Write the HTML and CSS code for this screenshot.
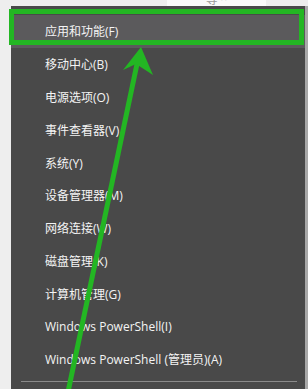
FILE: index.html
```html
<!DOCTYPE html>
<html lang="zh-CN">
<head>
<meta charset="utf-8">
<link rel="stylesheet" href="styles.css">
</head>
<body>
<div class="page">
  <div class="topstrip">
    <div class="topbox"><span class="toptext">等 ^</span></div>
  </div>
  <div class="row">
    <div class="menu">
      <div class="item active">应用和功能(F)</div>
      <div class="item">移动中心(B)</div>
      <div class="item">电源选项(O)</div>
      <div class="item">事件查看器(V)</div>
      <div class="item">系统(Y)</div>
      <div class="item">设备管理器(M)</div>
      <div class="item">网络连接(W)</div>
      <div class="item">磁盘管理(K)</div>
      <div class="item">计算机管理(G)</div>
      <div class="item">Windows PowerShell(I)</div>
      <div class="item">Windows PowerShell (管理员)(A)</div>
      <div class="sep"></div>
    </div>
    <div class="edge"></div>
  </div>
  <div class="greenbox"></div>
  <svg class="arrow" width="308" height="389" viewBox="0 0 308 389">
    <line x1="68" y1="392" x2="137" y2="64" stroke="#23b623" stroke-width="5"/>
    <polygon points="141,47 123,70 136,64 153,75" fill="#23b623"/>
  </svg>
</div>
</body>
</html>
```
FILE: styles.css
```css
html, body {
  margin: 0;
  padding: 0;
}
body {
  width: 308px;
  height: 389px;
  overflow: hidden;
  background: #eeeeee;
  font-family: "Open Sans", "Noto Sans CJK SC", sans-serif;
}
.page {
  position: relative;
  width: 308px;
  height: 389px;
  overflow: hidden;
}
.topstrip {
  height: 6px;
  display: flex;
  padding-left: 167px;
}
.topbox {
  width: 99px;
  height: 6px;
  background: #fafafa;
  overflow: hidden;
  display: flex;
  justify-content: center;
}
.toptext {
  font-size: 12px;
  line-height: 12px;
  margin-top: -7px;
  color: #9a9a9a;
  font-family: "Noto Sans CJK SC", sans-serif;
}
.row {
  display: flex;
  padding-left: 11px;
  height: 383px;
}
.menu {
  width: 294px;
  background: #494949;
  padding-top: 9px;
  display: flex;
  flex-direction: column;
}
.edge {
  width: 3px;
  background: #a8a8a8;
}
.item {
  height: 32.8px;
  flex: none;
  display: flex;
  align-items: center;
  padding-left: 34px;
  color: #f4f4f4;
  font-size: 12px;
  font-family: "Open Sans", "Noto Sans CJK SC", sans-serif;
}
.item.active {
  background: #5b5a5c;
}
.sep {
  margin-top: 5px;
  margin-left: 10px;
  width: 276px;
  height: 1px;
  background: #8a8a8a;
  flex: none;
}
.greenbox {
  position: absolute;
  left: 9px;
  top: 9px;
  width: 295px;
  height: 36px;
  box-sizing: border-box;
  border: 5px solid #23b623;
}
.arrow {
  position: absolute;
  left: 0;
  top: 0;
}
```
